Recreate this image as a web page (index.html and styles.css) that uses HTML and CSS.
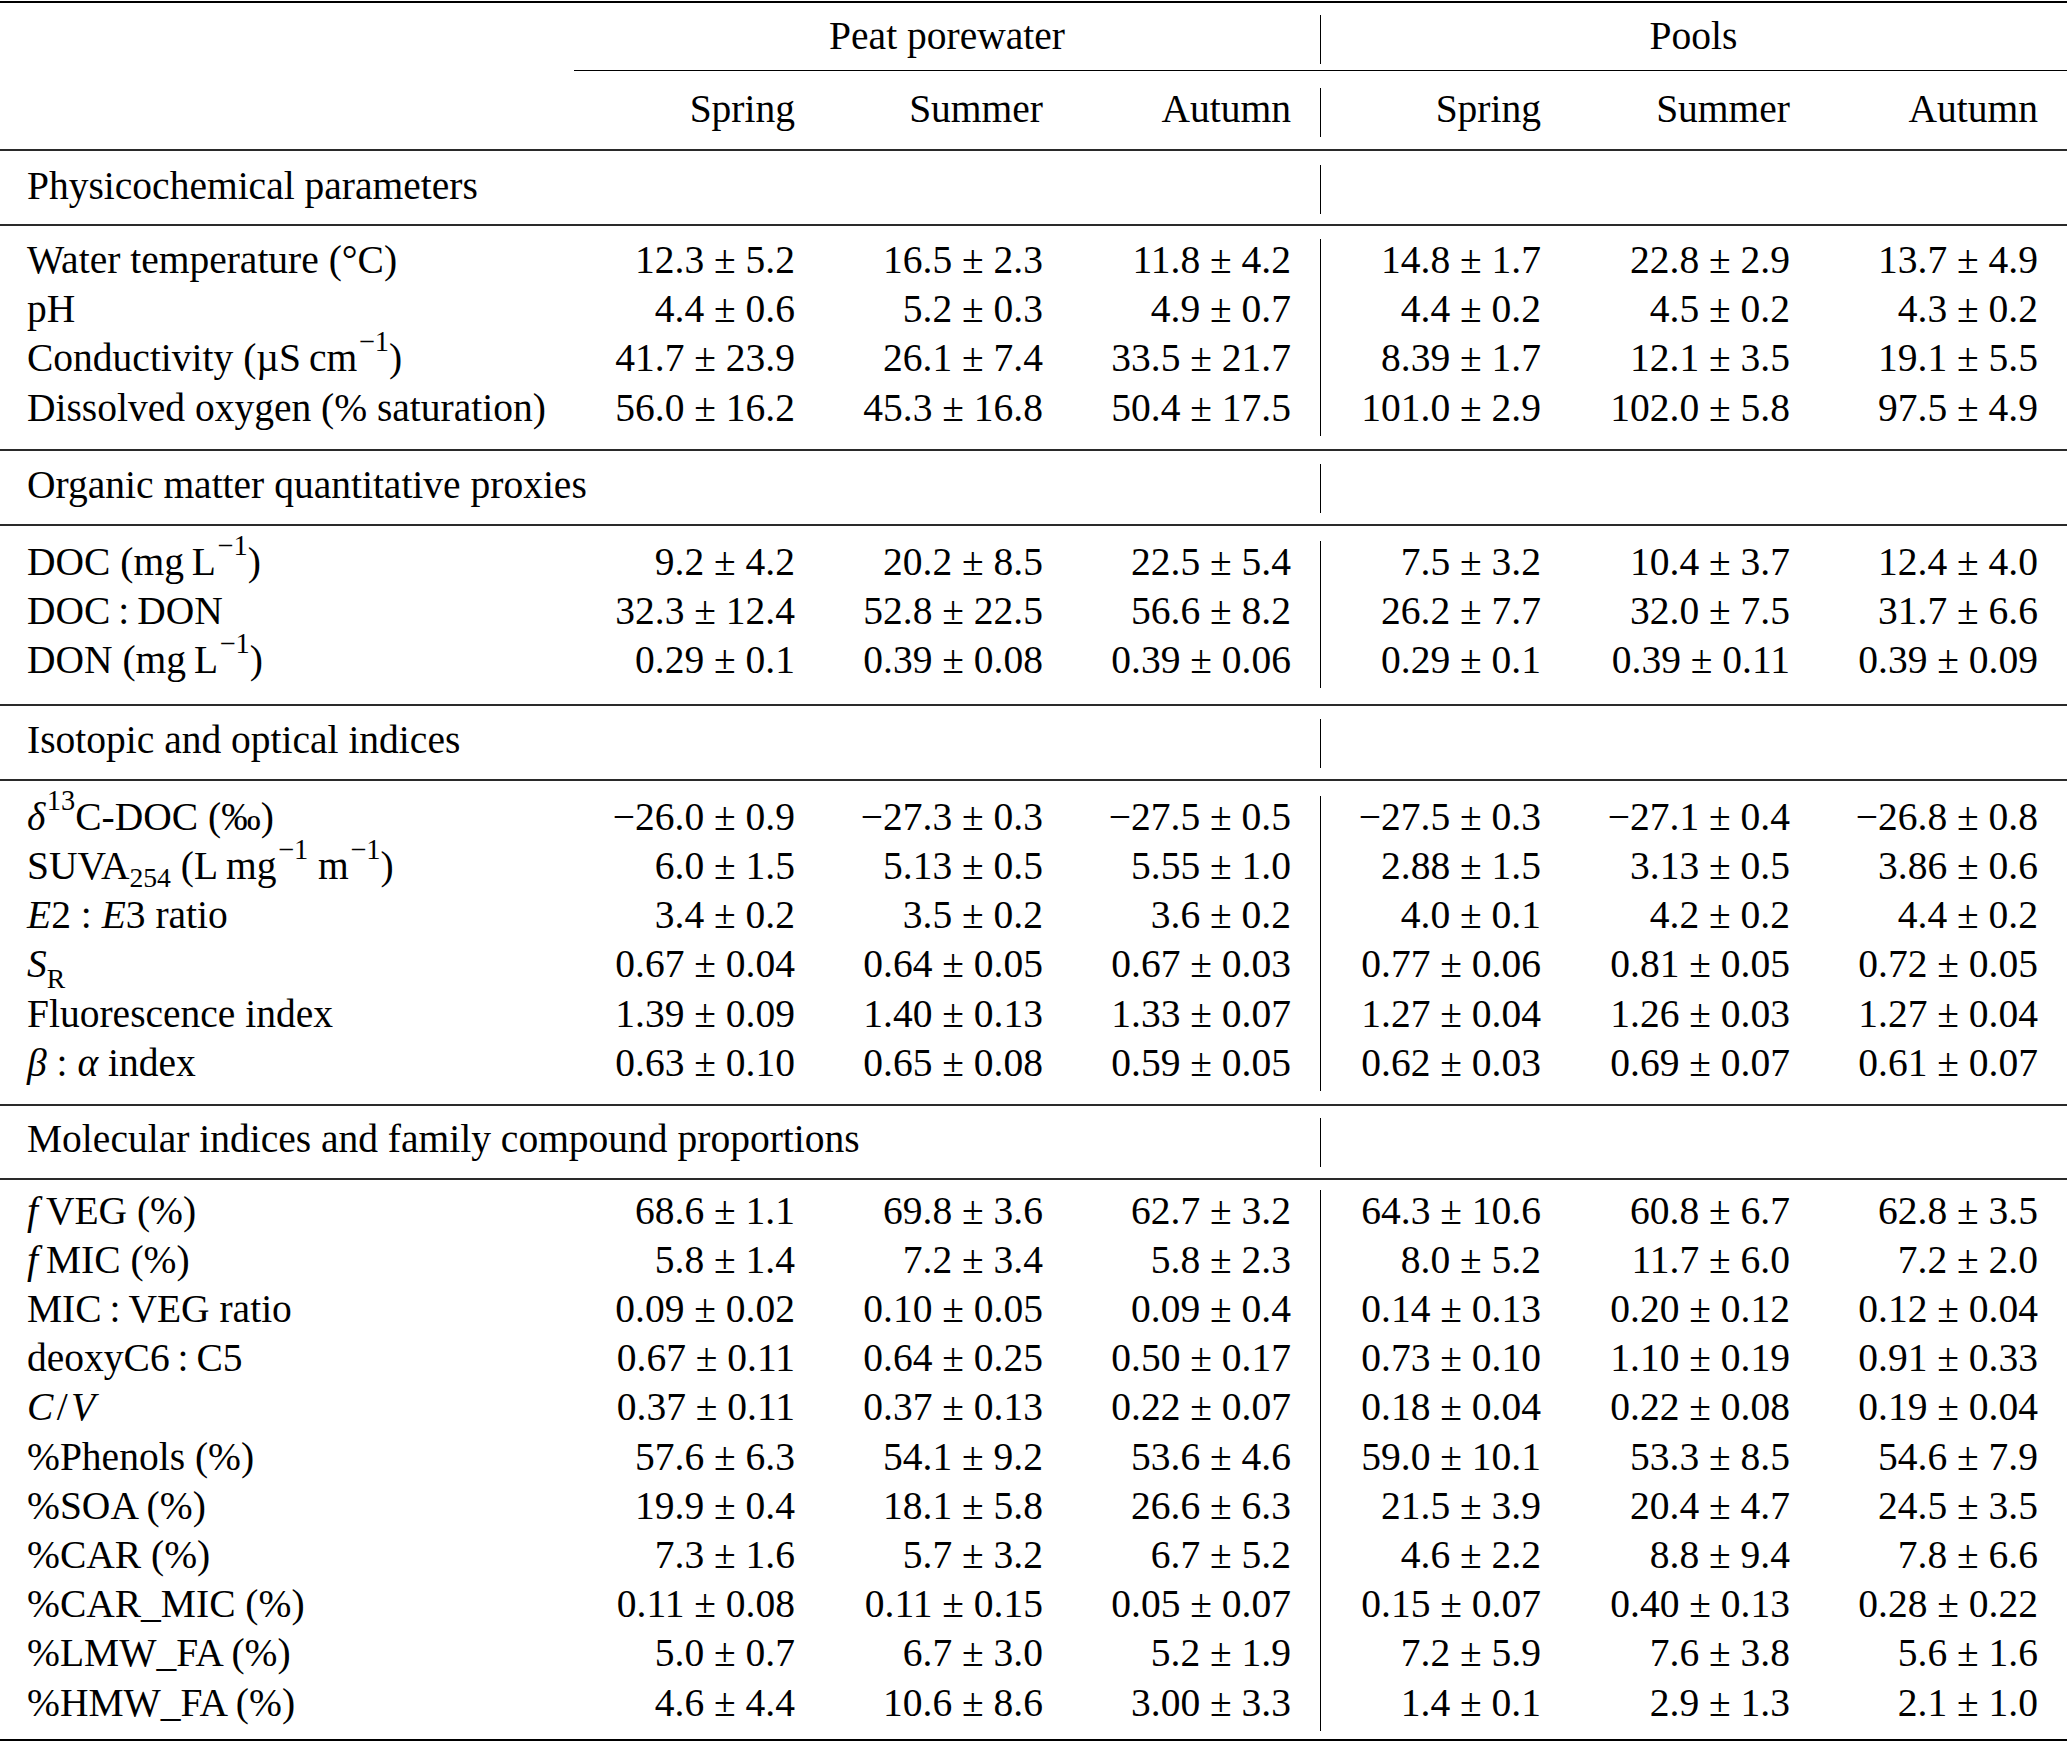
FILE: index.html
```html
<!DOCTYPE html>
<html lang="en">
<head>
<meta charset="utf-8">
<title>Seasonal water chemistry</title>
<link rel="stylesheet" href="styles.css">
</head>
<body>
<table class="tbl">
<colgroup>
<col class="c-label"><col class="c-num1"><col class="c-num"><col class="c-num"><col class="c-num1"><col class="c-num2"><col class="c-num">
</colgroup>
<tbody>
<tr class="rule heavy"><td colspan="7"></td></tr>
<tr class="s12"><td colspan="7"></td></tr>
<tr class="row"><td></td><td class="c" colspan="3">Peat porewater</td><td class="c v" colspan="3">Pools</td></tr>
<tr class="s5-8"><td colspan="7"></td></tr>
<tr class="rule cmid"><td></td><td colspan="6"></td></tr>
<tr class="s17"><td colspan="7"></td></tr>
<tr class="row"><td></td><td class="n">Spring</td><td class="n">Summer</td><td class="n">Autumn</td><td class="n v">Spring</td><td class="n">Summer</td><td class="n">Autumn</td></tr>
<tr class="s11-8"><td colspan="7"></td></tr>
<tr class="rule mid"><td colspan="7"></td></tr>

<tr class="s14"><td colspan="7"></td></tr>
<tr class="row"><td class="l" colspan="4">Physicochemical parameters</td><td class="v" colspan="3"></td></tr>
<tr class="s9-8"><td colspan="7"></td></tr>
<tr class="rule mid"><td colspan="7"></td></tr>
<tr class="s13"><td colspan="7"></td></tr>
<tr class="row"><td class="l">Water temperature (°C)</td><td class="n">12.3 ± 5.2</td><td class="n">16.5 ± 2.3</td><td class="n">11.8 ± 4.2</td><td class="n v">14.8 ± 1.7</td><td class="n">22.8 ± 2.9</td><td class="n">13.7 ± 4.9</td></tr>
<tr class="row"><td class="l">pH</td><td class="n">4.4 ± 0.6</td><td class="n">5.2 ± 0.3</td><td class="n">4.9 ± 0.7</td><td class="n v">4.4 ± 0.2</td><td class="n">4.5 ± 0.2</td><td class="n">4.3 ± 0.2</td></tr>
<tr class="row"><td class="l">Conductivity (µS&thinsp;cm<span class="sup">−1</span>)</td><td class="n">41.7 ± 23.9</td><td class="n">26.1 ± 7.4</td><td class="n">33.5 ± 21.7</td><td class="n v">8.39 ± 1.7</td><td class="n">12.1 ± 3.5</td><td class="n">19.1 ± 5.5</td></tr>
<tr class="row"><td class="l">Dissolved oxygen (% saturation)</td><td class="n">56.0 ± 16.2</td><td class="n">45.3 ± 16.8</td><td class="n">50.4 ± 17.5</td><td class="n v">101.0 ± 2.9</td><td class="n">102.0 ± 5.8</td><td class="n">97.5 ± 4.9</td></tr>
<tr class="s13-2"><td colspan="7"></td></tr>
<tr class="rule mid"><td colspan="7"></td></tr>

<tr class="s13"><td colspan="7"></td></tr>
<tr class="row"><td class="l" colspan="4">Organic matter quantitative proxies</td><td class="v" colspan="3"></td></tr>
<tr class="s10-8"><td colspan="7"></td></tr>
<tr class="rule mid"><td colspan="7"></td></tr>
<tr class="s15"><td colspan="7"></td></tr>
<tr class="row"><td class="l">DOC (mg&thinsp;L<span class="sup">−1</span>)</td><td class="n">9.2 ± 4.2</td><td class="n">20.2 ± 8.5</td><td class="n">22.5 ± 5.4</td><td class="n v">7.5 ± 3.2</td><td class="n">10.4 ± 3.7</td><td class="n">12.4 ± 4.0</td></tr>
<tr class="row"><td class="l">DOC&thinsp;:&thinsp;DON</td><td class="n">32.3 ± 12.4</td><td class="n">52.8 ± 22.5</td><td class="n">56.6 ± 8.2</td><td class="n v">26.2 ± 7.7</td><td class="n">32.0 ± 7.5</td><td class="n">31.7 ± 6.6</td></tr>
<tr class="row"><td class="l">DON (mg&thinsp;L<span class="sup">−1</span>)</td><td class="n">0.29 ± 0.1</td><td class="n">0.39 ± 0.08</td><td class="n">0.39 ± 0.06</td><td class="n v">0.29 ± 0.1</td><td class="n">0.39 ± 0.11</td><td class="n">0.39 ± 0.09</td></tr>
<tr class="s15-4"><td colspan="7"></td></tr>
<tr class="rule mid"><td colspan="7"></td></tr>

<tr class="s13"><td colspan="7"></td></tr>
<tr class="row"><td class="l" colspan="4">Isotopic and optical indices</td><td class="v" colspan="3"></td></tr>
<tr class="s10-8"><td colspan="7"></td></tr>
<tr class="rule mid"><td colspan="7"></td></tr>
<tr class="s15"><td colspan="7"></td></tr>
<tr class="row"><td class="l"><i>δ</i><span class="sup">13</span>C-DOC (‰)</td><td class="n">−26.0 ± 0.9</td><td class="n">−27.3 ± 0.3</td><td class="n">−27.5 ± 0.5</td><td class="n v">−27.5 ± 0.3</td><td class="n">−27.1 ± 0.4</td><td class="n">−26.8 ± 0.8</td></tr>
<tr class="row"><td class="l">SUVA<span class="sub">254</span> (L&thinsp;mg<span class="sup">−1</span> m<span class="sup">−1</span>)</td><td class="n">6.0 ± 1.5</td><td class="n">5.13 ± 0.5</td><td class="n">5.55 ± 1.0</td><td class="n v">2.88 ± 1.5</td><td class="n">3.13 ± 0.5</td><td class="n">3.86 ± 0.6</td></tr>
<tr class="row"><td class="l"><i>E</i>2 : <i>E</i>3 ratio</td><td class="n">3.4 ± 0.2</td><td class="n">3.5 ± 0.2</td><td class="n">3.6 ± 0.2</td><td class="n v">4.0 ± 0.1</td><td class="n">4.2 ± 0.2</td><td class="n">4.4 ± 0.2</td></tr>
<tr class="row"><td class="l"><i>S</i><span class="sub sub-r">R</span></td><td class="n">0.67 ± 0.04</td><td class="n">0.64 ± 0.05</td><td class="n">0.67 ± 0.03</td><td class="n v">0.77 ± 0.06</td><td class="n">0.81 ± 0.05</td><td class="n">0.72 ± 0.05</td></tr>
<tr class="row"><td class="l">Fluorescence index</td><td class="n">1.39 ± 0.09</td><td class="n">1.40 ± 0.13</td><td class="n">1.33 ± 0.07</td><td class="n v">1.27 ± 0.04</td><td class="n">1.26 ± 0.03</td><td class="n">1.27 ± 0.04</td></tr>
<tr class="row"><td class="l"><i>β</i> : <i>α</i> index</td><td class="n">0.63 ± 0.10</td><td class="n">0.65 ± 0.08</td><td class="n">0.59 ± 0.05</td><td class="n v">0.62 ± 0.03</td><td class="n">0.69 ± 0.07</td><td class="n">0.61 ± 0.07</td></tr>
<tr class="s12-8"><td colspan="7"></td></tr>
<tr class="rule mid"><td colspan="7"></td></tr>

<tr class="s12"><td colspan="7"></td></tr>
<tr class="row"><td class="l" colspan="4">Molecular indices and family compound proportions</td><td class="v" colspan="3"></td></tr>
<tr class="s10-8"><td colspan="7"></td></tr>
<tr class="rule mid"><td colspan="7"></td></tr>
<tr class="s10"><td colspan="7"></td></tr>
<tr class="row"><td class="l"><i>f</i>&thinsp;VEG (%)</td><td class="n">68.6 ± 1.1</td><td class="n">69.8 ± 3.6</td><td class="n">62.7 ± 3.2</td><td class="n v">64.3 ± 10.6</td><td class="n">60.8 ± 6.7</td><td class="n">62.8 ± 3.5</td></tr>
<tr class="row"><td class="l"><i>f</i>&thinsp;MIC (%)</td><td class="n">5.8 ± 1.4</td><td class="n">7.2 ± 3.4</td><td class="n">5.8 ± 2.3</td><td class="n v">8.0 ± 5.2</td><td class="n">11.7 ± 6.0</td><td class="n">7.2 ± 2.0</td></tr>
<tr class="row"><td class="l">MIC&thinsp;:&thinsp;VEG ratio</td><td class="n">0.09 ± 0.02</td><td class="n">0.10 ± 0.05</td><td class="n">0.09 ± 0.4</td><td class="n v">0.14 ± 0.13</td><td class="n">0.20 ± 0.12</td><td class="n">0.12 ± 0.04</td></tr>
<tr class="row"><td class="l">deoxyC6&thinsp;:&thinsp;C5</td><td class="n">0.67 ± 0.11</td><td class="n">0.64 ± 0.25</td><td class="n">0.50 ± 0.17</td><td class="n v">0.73 ± 0.10</td><td class="n">1.10 ± 0.19</td><td class="n">0.91 ± 0.33</td></tr>
<tr class="row"><td class="l"><i>C</i>&#8202;/&#8202;<i>V</i></td><td class="n">0.37 ± 0.11</td><td class="n">0.37 ± 0.13</td><td class="n">0.22 ± 0.07</td><td class="n v">0.18 ± 0.04</td><td class="n">0.22 ± 0.08</td><td class="n">0.19 ± 0.04</td></tr>
<tr class="row"><td class="l">%Phenols (%)</td><td class="n">57.6 ± 6.3</td><td class="n">54.1 ± 9.2</td><td class="n">53.6 ± 4.6</td><td class="n v">59.0 ± 10.1</td><td class="n">53.3 ± 8.5</td><td class="n">54.6 ± 7.9</td></tr>
<tr class="row"><td class="l">%SOA (%)</td><td class="n">19.9 ± 0.4</td><td class="n">18.1 ± 5.8</td><td class="n">26.6 ± 6.3</td><td class="n v">21.5 ± 3.9</td><td class="n">20.4 ± 4.7</td><td class="n">24.5 ± 3.5</td></tr>
<tr class="row"><td class="l">%CAR (%)</td><td class="n">7.3 ± 1.6</td><td class="n">5.7 ± 3.2</td><td class="n">6.7 ± 5.2</td><td class="n v">4.6 ± 2.2</td><td class="n">8.8 ± 9.4</td><td class="n">7.8 ± 6.6</td></tr>
<tr class="row"><td class="l">%CAR_MIC (%)</td><td class="n">0.11 ± 0.08</td><td class="n">0.11 ± 0.15</td><td class="n">0.05 ± 0.07</td><td class="n v">0.15 ± 0.07</td><td class="n">0.40 ± 0.13</td><td class="n">0.28 ± 0.22</td></tr>
<tr class="row"><td class="l">%LMW_FA (%)</td><td class="n">5.0 ± 0.7</td><td class="n">6.7 ± 3.0</td><td class="n">5.2 ± 1.9</td><td class="n v">7.2 ± 5.9</td><td class="n">7.6 ± 3.8</td><td class="n">5.6 ± 1.6</td></tr>
<tr class="row"><td class="l">%HMW_FA (%)</td><td class="n">4.6 ± 4.4</td><td class="n">10.6 ± 8.6</td><td class="n">3.00 ± 3.3</td><td class="n v">1.4 ± 0.1</td><td class="n">2.9 ± 1.3</td><td class="n">2.1 ± 1.0</td></tr>
<tr class="s7-8"><td colspan="7"></td></tr>
<tr class="rule heavy"><td colspan="7"></td></tr>
</tbody>
</table>
</body>
</html>
```

FILE: styles.css
```css
html, body {
  margin: 0;
  padding: 0;
  background: #ffffff;
}

body {
  font-family: "Liberation Serif", "Times New Roman", serif;
  font-size: 39.5px;
  color: #000000;
}

.tbl {
  width: 2067px;
  table-layout: fixed;
  border-collapse: separate;
  border-spacing: 0;
  margin-top: 1px;
}

.c-label { width: 574px; }
.c-num { width: 248px; }
.c-num1 { width: 250px; }
.c-num2 { width: 249px; }

.tbl td {
  padding: 0;
  white-space: nowrap;
}

/* text rows: 49.2px pitch, baseline 34.4px below the row top */
.row td {
  line-height: 42px;
  padding-bottom: 7.2px;
  vertical-align: top;
}

.row .l {
  text-align: left;
  padding-left: 27px;
}

.row .n {
  text-align: right;
  padding-right: 29px;
}

.row .c {
  text-align: center;
}

/* vertical divider between the two site groups */
.v {
  background-image: linear-gradient(#000000, #000000);
  background-size: 1px 100%;
  background-repeat: no-repeat;
  background-position: left top;
}

/* horizontal rules */
.rule td {
  padding: 0;
  font-size: 0;
  line-height: 0;
}
.rule.heavy td { height: 2px; background: #000000; }
.rule.mid td { height: 2px; background: #2a2a2a; }
.rule.cmid td { height: 1px; }
.rule.cmid td + td { background: #000000; }

/* vertical spacing rows */
.tbl tr[class^="s"] td { font-size: 0; line-height: 0; padding: 0; }
.s5-8 td { height: 5.8px; }
.s7-8 td { height: 7.8px; }
.s9-8 td { height: 9.8px; }
.s10 td { height: 10px; }
.s10-8 td { height: 10.8px; }
.s11-8 td { height: 11.8px; }
.s12 td { height: 12px; }
.s12-8 td { height: 12.8px; }
.s13 td { height: 13px; }
.s13-2 td { height: 13.2px; }
.s14 td { height: 14px; }
.s15 td { height: 15px; }
.s15-4 td { height: 15.4px; }
.s17 td { height: 17px; }

/* super- and subscripts */
.sup {
  font-size: 0.72em;
  line-height: 0;
  position: relative;
  top: -0.7em;
  padding-left: 0.05em;
}
.sub {
  font-size: 0.7em;
  line-height: 0;
  position: relative;
  top: 0.3em;
}
.sub-r {
  top: 0.38em;
}
```
